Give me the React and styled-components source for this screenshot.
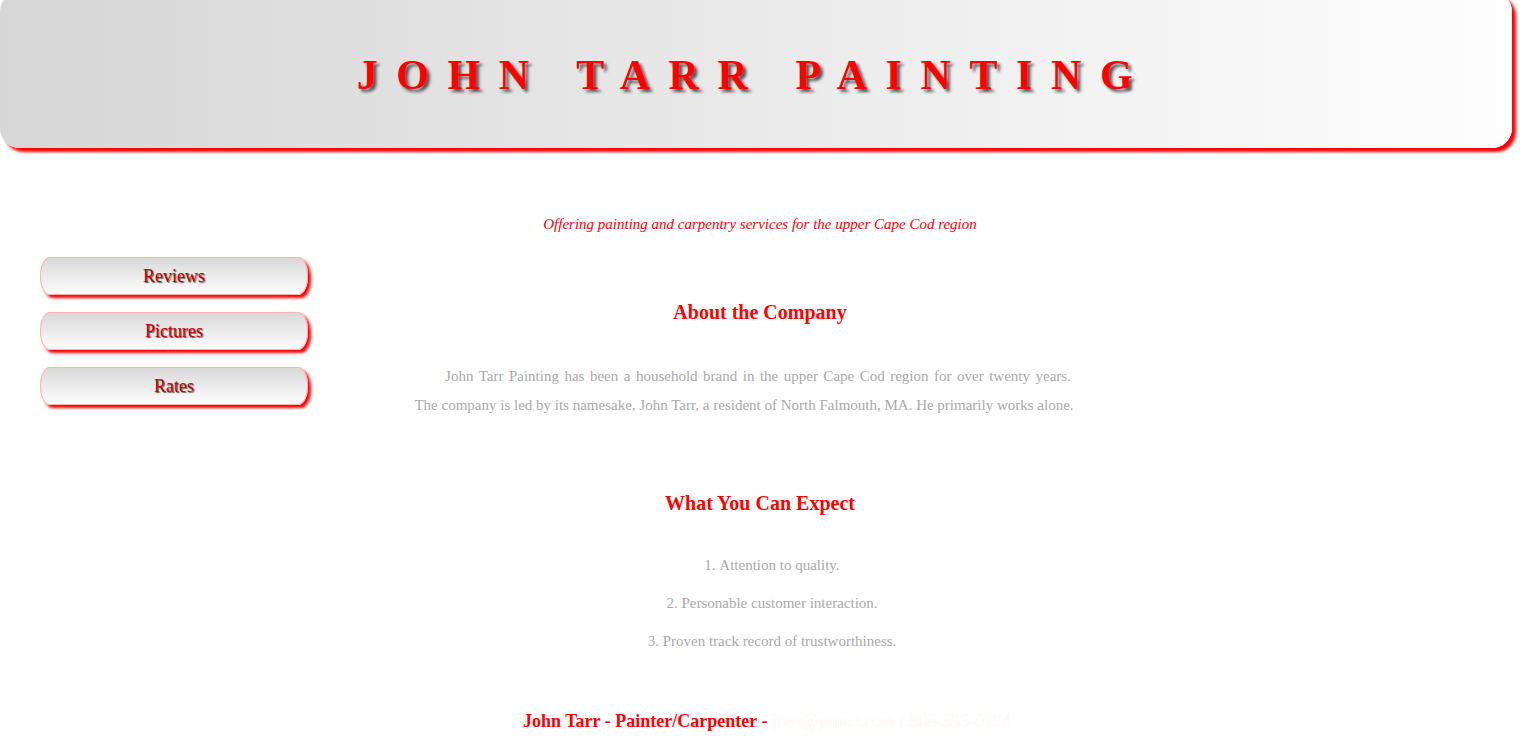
import React from "react";
import styled, { createGlobalStyle } from "styled-components";

const GlobalStyle = createGlobalStyle`
  body {
    margin: 0;
    background: #fff;
    font-family: "Liberation Serif", "Times New Roman", serif;
    overflow: hidden;
  }
`;

const Header = styled.header`
  margin: -8px 8px 0 0;
  height: 156px;
  padding-top: 10px;
  box-sizing: border-box;
  display: flex;
  align-items: center;
  justify-content: center;
  border-radius: 20px;
  background: linear-gradient(to right, #d6d6d6, #fefefe);
  box-shadow: 4px 4px 3px #ff0000;
`;

const Title = styled.h1`
  margin: 0 4px 0 0;
  font-size: 42px;
  font-weight: bold;
  letter-spacing: 18.6px;
  color: #ff0000;
  text-shadow: 3px 3px 3px #555;
`;

const Tagline = styled.p`
  margin: 68px 0 0;
  text-align: center;
  font-style: italic;
  font-size: 15px;
  line-height: 17px;
  color: #ff0000;
`;

const Body = styled.div`
  display: grid;
  grid-template-columns: 310px 1fr 310px;
  margin-top: 24px;
`;

const Sidebar = styled.nav`
  display: flex;
  flex-direction: column;
  gap: 17px;
  padding-left: 40px;
`;

const NavButton = styled.a`
  display: flex;
  align-items: center;
  justify-content: center;
  width: 268px;
  height: 38px;
  box-sizing: border-box;
  border: 1px solid #ffb0b0;
  border-radius: 10px / 18px;
  background: linear-gradient(to bottom, #d9d9d9, #fdfdfd);
  box-shadow: 3px 3px 3px #ff0000;
  font-size: 18px;
  color: #c40000;
  text-shadow: 1px 1px 1px #555;
  text-decoration: none;
  cursor: pointer;
`;

const Main = styled.main`
  display: flex;
  flex-direction: column;
  align-items: center;
  text-align: center;
`;

const Heading = styled.h2`
  margin: ${(p) => p.$top}px 0 0;
  font-size: 20px;
  line-height: 23px;
  font-weight: bold;
  color: #ff0000;
`;

const Text = styled.p`
  margin: ${(p) => p.$top}px ${(p) => p.$shift || 0}px 0 0;
  font-size: 15px;
  line-height: 17px;
  word-spacing: ${(p) => p.$spread || 0}px;
  color: #aaaaaa;
  white-space: nowrap;
`;

const List = styled.ol`
  margin: 42px 0 0;
  padding-left: 24px;
  list-style-position: inside;
  display: flex;
  flex-direction: column;
  gap: 21px;
`;

const Item = styled.li`
  font-size: 15px;
  line-height: 17px;
  color: #aaaaaa;
`;

const Footer = styled.footer`
  margin: 61px 0 0 14px;
  font-size: 18px;
  line-height: 20px;
  font-weight: bold;
  color: #ff0000;
  white-space: nowrap;
`;

const Contact = styled.span`
  color: #ffffff;
  font-weight: normal;
  text-shadow: 0 0 1px rgba(255, 0, 0, 0.12);
`;

export default function App() {
  const links = ["Reviews", "Pictures", "Rates"];
  const expect = [
    "Attention to quality.",
    "Personable customer interaction.",
    "Proven track record of trustworthiness.",
  ];

  return (
    <>
      <GlobalStyle />
      <Header>
        <Title>JOHN TARR PAINTING</Title>
      </Header>
      <Tagline>Offering painting and carpentry services for the upper Cape Cod region</Tagline>
      <Body>
        <Sidebar>
          {links.map((l) => (
            <NavButton key={l}>{l}</NavButton>
          ))}
        </Sidebar>
        <Main>
          <Heading $top={44}>About the Company</Heading>
          <Text $top={44} $shift={4} $spread={1.75}>
            John Tarr Painting has been a household brand in the upper Cape Cod region for over twenty years.
          </Text>
          <Text $top={12} $shift={32}>
            The company is led by its namesake, John Tarr, a resident of North Falmouth, MA. He primarily works alone.
          </Text>
          <Heading $top={78}>What You Can Expect</Heading>
          <List>
            {expect.map((e) => (
              <Item key={e}>{e}</Item>
            ))}
          </List>
          <Footer>
            John Tarr - Painter/Carpenter - <Contact>jtarr@gmail.com / 508-555-0194</Contact>
          </Footer>
        </Main>
      </Body>
    </>
  );
}
